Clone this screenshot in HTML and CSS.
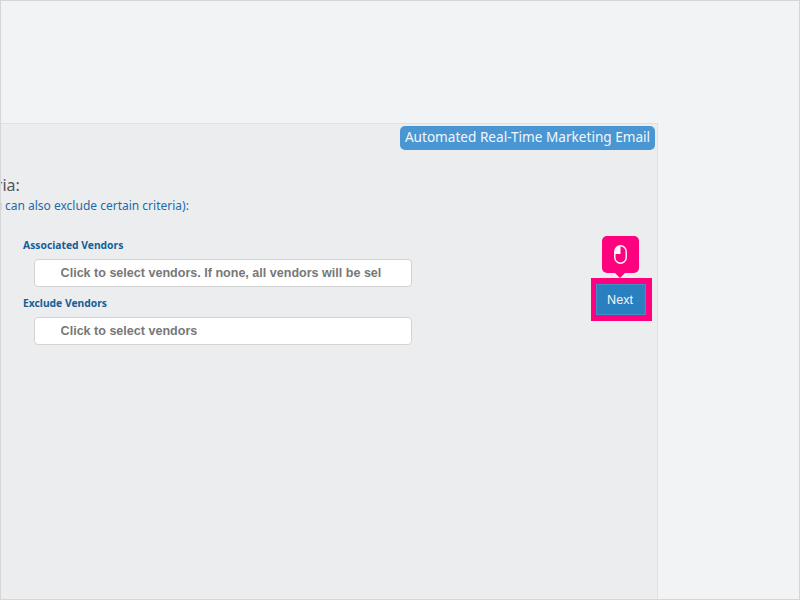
FILE: index.html
```html
<!DOCTYPE html>
<html lang="en">
<head>
<meta charset="utf-8">
<title>Automated Real-Time Marketing Email</title>
<link rel="stylesheet" href="styles.css">
</head>
<body>
<div class="frame">
  <div class="panel">
    <div class="tag-row"><span class="tag">Automated Real-Time Marketing Email</span></div>
    <div class="heading"><h2 class="title">Select criteria:</h2></div>
    <p class="sub">You can also exclude certain criteria):</p>
    <div class="content">
      <div class="fields">
        <label class="label">Associated Vendors</label>
        <div class="field"><span class="field-text">Click to select vendors. If none, all vendors will be selected</span></div>
        <label class="label">Exclude Vendors</label>
        <div class="field"><span class="field-text">Click to select vendors</span></div>
      </div>
      <div class="action">
        <div class="tip">
          <svg class="mouse" width="13" height="19" viewBox="0 0 13 19" fill="none">
            <rect x="0.8" y="0.8" width="11.4" height="17.4" rx="5.7" stroke="#fff" stroke-width="1.4"/>
            <path d="M6.5 1A5.5 5.5 0 0 0 1 6.5V9h5.5z" fill="#fff"/>
          </svg>
        </div>
        <div class="highlight"><button class="next">Next</button></div>
      </div>
    </div>
  </div>
</div>
</body>
</html>
```
FILE: styles.css
```css
* { box-sizing: border-box; }
html, body { margin: 0; padding: 0; }
body { width: 800px; height: 600px; overflow: hidden; }
.frame {
  width: 800px; height: 600px;
  background: #f2f3f5;
  border: 1px solid #d6d6d6;
  padding-top: 122px;
  overflow: hidden;
}
.panel {
  width: 657px; height: 476px;
  background: #ecedef;
  border-top: 1px solid #e0e1e3;
  border-right: 1px solid #e0e1e3;
  font-family: "Noto Sans", sans-serif;
  overflow: hidden;
}
.tag-row { display: flex; justify-content: flex-end; padding: 2px 2px 0 0; }
.tag {
  width: 255px; height: 24px;
  background: #4a96d2;
  color: #f2f6fb;
  border-radius: 5px;
  font-size: 13.6px;
  line-height: 22px;
  text-align: center;
  white-space: nowrap;
}
.heading { display: flex; justify-content: flex-start; margin-top: 25px; height: 20px; }
.title {
  margin: 0 0 0 -87px;
  font-size: 16px;
  font-weight: 400;
  line-height: 20px;
  color: #555;
  white-space: nowrap;
}
.sub {
  margin: 3px 0 0 -20px;
  font-size: 12px;
  line-height: 16px;
  color: #1e6ba5;
  white-space: nowrap;
}
.content { display: flex; margin-top: 23px; }
.fields { width: 411px; padding-left: 22px; flex: none; }
.label {
  display: block;
  height: 22px;
  font-size: 10.3px;
  font-weight: 700;
  line-height: 16px;
  color: #155e96;
  white-space: nowrap;
}
.field {
  margin: 0 0 8px 11px;
  width: 378px; height: 28px;
  background: #fff;
  border: 1px solid #d3d3d3;
  border-radius: 4px;
  padding: 0 30px 0 25.6px;
  font-family: "Liberation Sans", sans-serif;
  font-size: 12.55px;
  font-weight: 700;
  line-height: 26px;
  color: #777;
  white-space: nowrap;
  overflow: hidden;
}
.field-text { display: block; overflow: hidden; }
.action { margin-left: 179px; position: relative; margin-top: 41px; }
.highlight {
  width: 61px; height: 43px;
  background: #ff007f;
  padding: 6px 5px;
}
.next {
  display: block;
  width: 50px; height: 31px;
  margin: 0;
  padding: 0 2px 0 0;
  background: #2a80bf;
  border: 1px solid #3f8fc8;
  color: #f2f6fb;
  font-family: "Liberation Sans", sans-serif;
  font-size: 12.6px;
}
.tip {
  position: absolute;
  left: 11px; top: -42px;
  width: 37px; height: 37px;
  background: #ff007f;
  border-radius: 5px;
  display: flex; align-items: center; justify-content: center;
}
.tip::after {
  content: "";
  position: absolute;
  left: 12px; bottom: -5px;
  border-left: 6px solid transparent;
  border-right: 6px solid transparent;
  border-top: 6px solid #ff007f;
}
```
